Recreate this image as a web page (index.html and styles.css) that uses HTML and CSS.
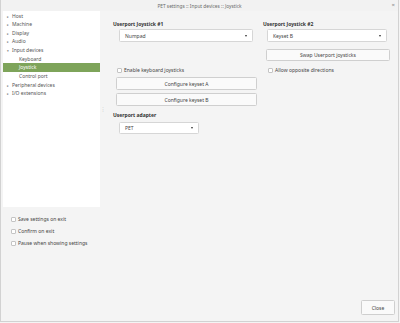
FILE: index.html
```html
<!DOCTYPE html>
<html>
<head>
<meta charset="utf-8">
<link rel="stylesheet" href="styles.css">
</head>
<body>
<div class="window">
  <div class="titlebar">
    <span class="title">PET settings :: Input devices :: Joystick</span>
    <span class="x">×</span>
  </div>
  <div class="main">
    <div class="left">
      <div class="tree">
        <div class="row"><span class="arr">▸</span>Host</div>
        <div class="row"><span class="arr">▸</span>Machine</div>
        <div class="row"><span class="arr">▸</span>Display</div>
        <div class="row"><span class="arr">▸</span>Audio</div>
        <div class="row"><span class="arr">▾</span>Input devices</div>
        <div class="row child">Keyboard</div>
        <div class="row child sel">Joystick</div>
        <div class="row child">Control port</div>
        <div class="row"><span class="arr">▸</span>Peripheral devices</div>
        <div class="row"><span class="arr">▸</span>I/O extensions</div>
      </div>
      <div class="opts">
        <label class="chk"><span class="box"></span>Save settings on exit</label>
        <label class="chk"><span class="box"></span>Confirm on exit</label>
        <label class="chk"><span class="box"></span>Pause when showing settings</label>
      </div>
    </div>
    <div class="handle">⋮</div>
    <div class="content">
      <div class="lbl c1 r1">Userport Joystick #1</div>
      <div class="lbl c2 r1">Userport Joystick #2</div>
      <div class="combo c1 r2 w1"><span>Numpad</span><span class="tri"></span></div>
      <div class="combo c2 r2 w2"><span>Keyset B</span><span class="tri"></span></div>
      <div class="btn c2 r3 swap">Swap Userport joysticks</div>
      <label class="chk c1 r4 ck1"><span class="box"></span>Enable keyboard joysticks</label>
      <label class="chk c2 r4 ck2"><span class="box"></span>Allow opposite directions</label>
      <div class="btn c1 r5 cfg">Configure keyset A</div>
      <div class="btn c1 r6 cfg">Configure keyset B</div>
      <div class="lbl c1 r7">Userport adapter</div>
      <div class="combo c1 r8 w3"><span>PET</span><span class="tri"></span></div>
    </div>
  </div>
  <div class="footer">
    <div class="btn close">Close</div>
  </div>
</div>
</body>
</html>
```
FILE: styles.css
```css
* { box-sizing: border-box; }
html, body { margin: 0; padding: 0; background: #f4f4f4; }
body {
  font-family: "Noto Sans", "DejaVu Sans", sans-serif;
  font-size: 5px;
  color: #3a3a3a;
}
.window {
  width: 399px;
  height: 322px;
  border: 1px solid #d2d2d2;
  border-top: none;
  background: #f4f4f4;
  display: flex;
  flex-direction: column;
}
.titlebar {
  height: 11px;
  position: relative;
  display: flex;
  align-items: center;
  justify-content: center;
  color: #6a6a6a;
  background: #f2f2f2;
}
.title { font-size: 4.8px; }
.titlebar .x {
  position: absolute;
  right: 3px;
  top: 2px;
  font-size: 6px;
  line-height: 6px;
  color: #888;
}
.main {
  display: flex;
  flex: 1;
}
.left {
  width: 100px;
  padding-left: 2px;
  display: flex;
  flex-direction: column;
}
.tree {
  background: #ffffff;
  height: 196px;
  padding-top: 0.5px;
}
.row {
  height: 8.67px;
  line-height: 8.67px;
  padding-left: 4px;
  color: #555;
  white-space: nowrap;
}
.row .arr {
  display: inline-block;
  width: 5px;
  font-size: 3.5px;
  color: #777;
}
.row.child { padding-left: 16px; }
.row.sel { background: #7ea45a; color: #ffffff; }
.opts {
  padding-top: 8px;
  padding-left: 8px;
  display: flex;
  flex-direction: column;
  gap: 4px;
}
.chk {
  display: flex;
  align-items: center;
  height: 8px;
  color: #444;
  white-space: nowrap;
}
.box {
  width: 5px;
  height: 5px;
  background: #fff;
  border: 0.5px solid #c4c4c4;
  border-radius: 1px;
  margin-right: 2px;
  flex: none;
}
.handle {
  width: 6px;
  color: #aaa;
  font-size: 5px;
  padding-top: 95px;
  text-align: center;
}
.content {
  display: grid;
  grid-template-columns: 150px 135px;
  grid-template-rows: 8px 20px 17px 11px 16px 19px 10px 12px;
  padding-top: 10px;
  padding-left: 7px;
  align-items: start;
}
.c1 { grid-column: 1; }
.c2 { grid-column: 2; }
.r1 { grid-row: 1; }
.r2 { grid-row: 2; }
.r3 { grid-row: 3; }
.r4 { grid-row: 4; }
.r5 { grid-row: 5; }
.r6 { grid-row: 6; }
.r7 { grid-row: 7; }
.r8 { grid-row: 8; }
.lbl {
  font-weight: bold;
  height: 6px;
  line-height: 6px;
  color: #333;
}
.combo {
  height: 13px;
  background: #fff;
  border: 0.5px solid #d6d6d6;
  border-radius: 1.5px;
  display: flex;
  align-items: center;
  justify-content: space-between;
  padding: 0 5px;
  color: #444;
}
.combo.w1 { margin-left: 6px; width: 134px; }
.combo.w2 { margin-left: 4px; width: 120px; }
.combo.w3 { margin-left: 6px; width: 80px; height: 12px; }
.tri {
  width: 0;
  height: 0;
  border-left: 1.8px solid transparent;
  border-right: 1.8px solid transparent;
  border-top: 2.2px solid #333;
}
.btn {
  background: #fafafa;
  border: 0.5px solid #cfcfcf;
  border-radius: 1.5px;
  display: flex;
  align-items: center;
  justify-content: center;
  color: #444;
  white-space: nowrap;
}
.swap { margin-left: 3px; width: 124px; height: 12px; }
.cfg { margin-left: 3px; width: 141px; height: 13px; }
.ck1 { margin-left: 4px; }
.ck2 { margin-left: 5px; }
.footer {
  height: 22px;
  display: flex;
  justify-content: flex-end;
  align-items: flex-start;
  padding-right: 3px;
  padding-top: 1px;
}
.close { width: 34px; height: 15px; }
```
